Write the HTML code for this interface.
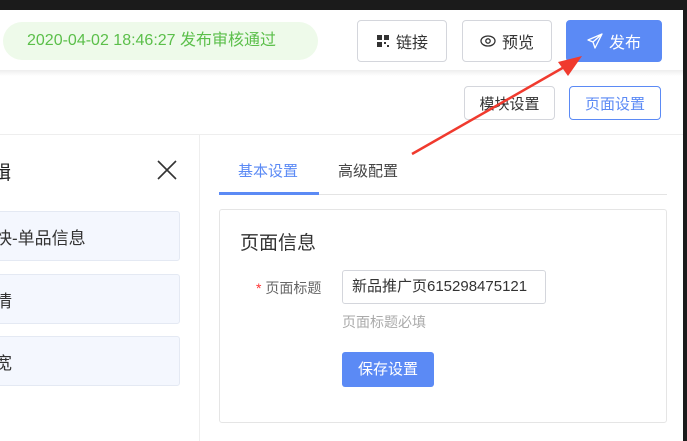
<!DOCTYPE html>
<html><head><meta charset="utf-8"><style>
*{margin:0;padding:0;box-sizing:border-box}
body{width:687px;height:441px;overflow:hidden;background:#1b1b1b;position:relative;font-family:"Liberation Sans","Noto Sans CJK SC",sans-serif}
.pg{position:absolute;left:0;top:10px;width:683px;height:431px;background:#fff}
.a{position:absolute}
.btn{position:absolute;border:1px solid #d4d6dc;border-radius:4px;background:#fff;color:#333;font-size:16px;display:flex;align-items:center;justify-content:center;gap:6px}
.item{position:absolute;left:-10px;width:190px;height:50px;background:#f4f7fe;border:1px solid #e4e9f3;border-radius:3px;font-size:17px;color:#333;display:flex;align-items:center;padding-left:4px}
</style></head><body>
<div class="pg"></div>
<div class="a" style="left:0;top:70px;width:683px;height:6px;background:linear-gradient(#eee,#fff)"></div>
<div class="a" style="left:3px;top:22px;width:315px;height:38px;border-radius:19px;background:#eefaea;color:#5bbf4a;font-size:16px;line-height:38px;padding-left:24px">2020-04-02 18:46:27 发布审核通过</div>
<div class="btn" style="left:357px;top:20px;width:90px;height:42px"><svg width="14" height="14" viewBox="0 0 14 14"><g fill="#333"><rect x="1" y="1" width="5" height="5"/><rect x="8" y="1" width="5" height="5"/><rect x="1" y="8" width="5" height="5"/><rect x="8" y="8" width="2" height="2"/><rect x="11" y="11" width="2" height="2"/></g></svg>链接</div>
<div class="btn" style="left:462px;top:20px;width:90px;height:42px"><svg width="16" height="12" viewBox="0 0 16 12"><ellipse cx="8" cy="6" rx="7" ry="5" fill="none" stroke="#333" stroke-width="1.3"/><circle cx="8" cy="6" r="2.2" fill="none" stroke="#333" stroke-width="1.3"/></svg>预览</div>
<div class="btn" style="left:566px;top:20px;width:96px;height:42px;background:#5b8af5;border-color:#5b8af5;color:#fff"><svg width="16" height="16" viewBox="0 0 16 16"><path d="M15 1L1 7l5 2 2 6z M6 9l9-8" fill="none" stroke="#fff" stroke-width="1.3" stroke-linejoin="round"/></svg>发布</div>
<div class="btn" style="left:464px;top:86px;width:91px;height:34px;font-size:15px">模块设置</div>
<div class="btn" style="left:569px;top:86px;width:92px;height:34px;font-size:15px;border-color:#5b8af5;color:#5b8af5">页面设置</div>
<div class="a" style="left:0;top:134px;width:683px;height:1px;background:#eee"></div>
<div class="a" style="left:199px;top:134px;width:1px;height:307px;background:#eee"></div>
<div class="a" style="left:-8px;top:158px;font-size:19px;color:#222">辑</div>
<svg class="a" style="left:157px;top:160px" width="20" height="20"><path d="M1 1L19 19M19 1L1 19" stroke="#333" stroke-width="1.6"/></svg>
<div class="item" style="top:211px">快-单品信息</div>
<div class="item" style="top:274px">情</div>
<div class="item" style="top:336px">宽</div>
<div class="a" style="left:238px;top:160px;font-size:15px;color:#5b8af5">基本设置</div>
<div class="a" style="left:338px;top:160px;font-size:15px;color:#444">高级配置</div>
<div class="a" style="left:219px;top:194px;width:448px;height:1px;background:#e4e4e4"></div>
<div class="a" style="left:219px;top:192px;width:100px;height:3px;background:#5b8af5"></div>
<div class="a" style="left:219px;top:209px;width:448px;height:214px;border:1px solid #e5e5e5;border-radius:3px"></div>
<div class="a" style="left:240px;top:228px;font-size:19px;color:#333">页面信息</div>
<div class="a" style="left:256px;top:278px;font-size:14px;color:#666"><span style="color:#f33">*</span> 页面标题</div>
<div class="a" style="left:342px;top:270px;width:204px;height:34px;border:1px solid #d4d6dc;border-radius:3px;font-size:15px;color:#333;line-height:32px;padding-left:9px">新品推广页615298475121</div>
<div class="a" style="left:342px;top:312px;font-size:14px;color:#aaa">页面标题必填</div>
<div class="a" style="left:342px;top:352px;width:92px;height:35px;background:#5b8af5;border-radius:3px;color:#fff;font-size:15px;line-height:35px;text-align:center">保存设置</div>
<svg class="a" style="left:0;top:0" width="687" height="441"><line x1="412" y1="154" x2="566" y2="66" stroke="#f03a2e" stroke-width="2.5"/><polygon points="582,56 558,62 568,76" fill="#f03a2e"/></svg>
</body></html>
